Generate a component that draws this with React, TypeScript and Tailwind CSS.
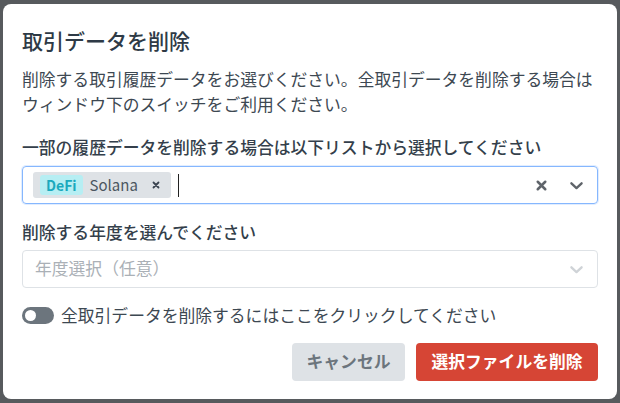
import { useState } from 'react'

const font = { fontFamily: '"Noto Sans CJK JP", "Noto Sans", sans-serif' }

function Chevron({ className }: { className?: string }) {
  return (
    <svg viewBox="0 0 20 20" className={className} fill="none" stroke="currentColor" strokeWidth="2.8" strokeLinecap="round" strokeLinejoin="round">
      <path d="M4 7.5l6 5.5 6-5.5" />
    </svg>
  )
}

function Cross({ className, width = 3 }: { className?: string; width?: number }) {
  return (
    <svg viewBox="0 0 20 20" className={className} fill="none" stroke="currentColor" strokeWidth={width} strokeLinecap="round">
      <path d="M5 5l10 10M15 5L5 15" />
    </svg>
  )
}

export default function App() {
  const [deleteAll, setDeleteAll] = useState(false)

  return (
    <div className="h-[403px] bg-[#575a5d] pt-[4px] px-[3px]" style={font}>
      <div className="h-[395px] bg-white rounded-[8px] px-[19px] pt-[21px] text-[#343f4b]">
        <h2 className="text-[21px] leading-[30px] font-medium text-[#2e3a46]">取引データを削除</h2>

        <p className="mt-3 text-[16.8px] leading-[25px] text-[#3d4852]">
          削除する取引履歴データをお選びください。全取引データを削除する場合はウィンドウ下のスイッチをご利用ください。
        </p>

        <label className="block mt-[18px] text-[16.8px] leading-[25px] font-medium">
          一部の履歴データを削除する場合は以下リストから選択してください
        </label>
        <div className="mt-[6px] h-[38px] flex items-center border border-[#86b7fe] rounded-[4px] pl-[10px] pr-[12px] shadow-[0_0_0_1px_rgba(134,183,254,0.25)]">
          <div className="flex items-center h-[26px] bg-[#dee2e6] rounded-[3px] pl-[7px] pr-[10px]">
            <span className="px-[6px] h-[20px] flex items-center rounded-[3px] bg-[#b6eef3] text-[#1ba9bd] text-[14px] font-bold">DeFi</span>
            <span className="ml-[7px] text-[15px] text-[#4b5660]">Solana</span>
            <Cross className="ml-[13px] w-[10px] h-[10px] text-[#3a4450]" width={3.6} />
          </div>
          <span className="ml-[7px] w-[1.5px] h-[23px] bg-[#222]" />
          <div className="flex-1" />
          <Cross className="w-[15px] h-[15px] text-[#5f646a]" width={3.4} />
          <Chevron className="ml-[19px] w-[17px] h-[17px] text-[#5f646a]" />
        </div>

        <label className="block mt-[16px] text-[16.8px] leading-[25px] font-medium">
          削除する年度を選んでください
        </label>
        <div className="mt-[5px] h-[38px] flex items-center border border-[#dee2e6] rounded-[4px] pl-[12px] pr-[12px]">
          <span className="flex-1 text-[16.8px] text-[#aab0b6]">年度選択（任意）</span>
          <Chevron className="w-[17px] h-[17px] text-[#cfd3d7]" />
        </div>

        <div className="mt-[15px] h-[25px] flex items-center">
          <button
            onClick={() => setDeleteAll(!deleteAll)}
            className={`relative w-[32px] h-[17px] rounded-full ${deleteAll ? 'bg-[#d64535]' : 'bg-[#6c757d]'}`}
          >
            <span className={`absolute top-[3px] w-[11px] h-[11px] rounded-full bg-white ${deleteAll ? 'left-[18px]' : 'left-[3px]'}`} />
          </button>
          <span className="ml-[7px] text-[16.8px] leading-[25px] text-[#3d4852]">
            全取引データを削除するにはここをクリックしてください
          </span>
        </div>

        <div className="mt-[15px] flex justify-end gap-[11px]">
          <button className="h-[38px] w-[113px] rounded-[4px] bg-[#dee2e6] text-[#6c757d] text-[16.8px] font-bold">
            キャンセル
          </button>
          <button className="h-[38px] w-[182px] rounded-[4px] bg-[#d64535] text-white text-[16.8px] font-bold">
            選択ファイルを削除
          </button>
        </div>
      </div>
    </div>
  )
}
